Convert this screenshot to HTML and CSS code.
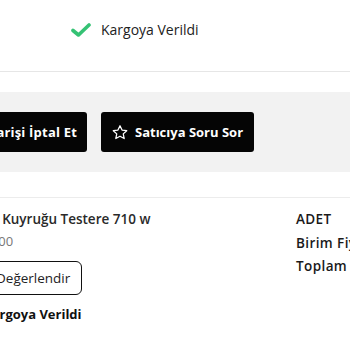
FILE: index.html
```html
<!DOCTYPE html>
<html lang="tr">
<head>
<meta charset="utf-8">
<link rel="stylesheet" href="styles.css">
</head>
<body>
<div class="page">
  <div class="status">
    <svg class="check" width="20" height="14" viewBox="0 0 20 14"><path d="M2 7.5 L7.5 12 L18 2" fill="none" stroke="#35c274" stroke-width="3.6" stroke-linecap="round" stroke-linejoin="round"/></svg>
    <span class="status-text">Kargoya Verildi</span>
  </div>
  <div class="actions">
    <button class="btn btn-cancel">Siparişi İptal Et</button>
    <button class="btn btn-ask">
      <svg class="star" width="18" height="17" viewBox="0 0 24 24"><path d="M12 2.5 L14.9 8.6 L21.5 9.4 L16.6 13.9 L17.9 20.5 L12 17.2 L6.1 20.5 L7.4 13.9 L2.5 9.4 L9.1 8.6 Z" fill="none" stroke="#fff" stroke-width="1.8" stroke-linejoin="round"/></svg>
      <span>Satıcıya Soru Sor</span>
    </button>
  </div>
  <div class="product">
    <div class="info">
      <div class="title">Tilki Kuyruğu Testere 710 w</div>
      <div class="price">25,00</div>
      <button class="rate">Değerlendir</button>
      <div class="state">Kargoya Verildi</div>
    </div>
    <div class="labels">
      <div>ADET</div>
      <div>Birim Fiyatı</div>
      <div>Toplam Tutar</div>
    </div>
  </div>
</div>
</body>
</html>
```
FILE: styles.css
```css
html, body {
  margin: 0;
  padding: 0;
  background: #fff;
  overflow: hidden;
}
body {
  width: 350px;
  height: 350px;
  font-family: "Open Sans", "Liberation Sans", sans-serif;
  color: #222;
}
.page {
  width: 350px;
}
.status {
  box-sizing: border-box;
  height: 72px;
  border-bottom: 1px solid #e6e6e6;
  display: flex;
  align-items: center;
  gap: 10px;
  padding: 0 0 12px 71px;
}
.status-text {
  font-size: 14px;
  color: #222;
}
.actions {
  margin-top: 20px;
  height: 80px;
  box-sizing: border-box;
  background: #f2f2f2;
  padding: 20px 0;
  display: flex;
  gap: 14px;
}
.btn {
  height: 40px;
  border: none;
  border-radius: 3px;
  background: #050505;
  color: #fff;
  font-family: inherit;
  font-size: 13px;
  font-weight: 700;
  display: flex;
  align-items: center;
  padding: 0 10px;
  flex: none;
}
.btn-cancel {
  width: 130px;
  margin-left: -43px;
  justify-content: flex-end;
  letter-spacing: 0.2px;
}
.btn-ask {
  width: 153px;
  gap: 6px;
}
.product {
  margin-top: 25px;
  border-top: 1px solid #ececec;
  display: flex;
  padding-top: 10px;
}
.info {
  margin-left: -17px;
  width: 313px;
  flex: none;
}
.title {
  margin-left: -11px;
  font-size: 13.5px;
  font-weight: 600;
  line-height: 22px;
  color: #2a2a2a;
  white-space: nowrap;
}
.price {
  margin-left: -3px;
  font-size: 13px;
  line-height: 22px;
  color: #777;
}
.rate {
  margin-top: 9px;
  margin-left: 1px;
  height: 34px;
  box-sizing: border-box;
  border: 1px solid #111;
  border-radius: 6px;
  background: #fff;
  font-family: inherit;
  font-size: 13.5px;
  color: #222;
  padding: 0 11px;
  display: block;
}
.state {
  margin-top: 8px;
  font-size: 13px;
  font-weight: 700;
  line-height: 22px;
  color: #111;
}
.labels {
  font-size: 13.5px;
  font-weight: 600;
  line-height: 23.5px;
  color: #1a1a1a;
  white-space: nowrap;
  letter-spacing: 0.4px;
}
```
